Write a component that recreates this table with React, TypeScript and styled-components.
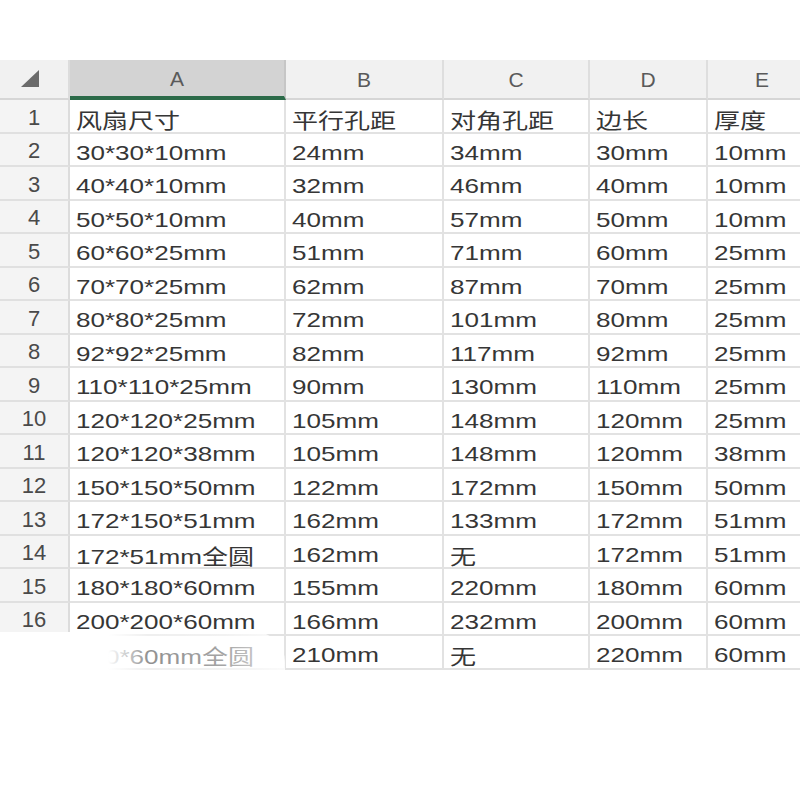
import styled, { createGlobalStyle } from "styled-components"

const GlobalStyle = createGlobalStyle`
  html, body {
    margin: 0;
    padding: 0;
    background: #ffffff;
  }
  body {
    font-family: "Liberation Sans", "Noto Sans CJK SC", sans-serif;
  }
`

const columns = ["A", "B", "C", "D", "E"]

const rows: string[][] = [
  ["风扇尺寸", "平行孔距", "对角孔距", "边长", "厚度"],
  ["30*30*10mm", "24mm", "34mm", "30mm", "10mm"],
  ["40*40*10mm", "32mm", "46mm", "40mm", "10mm"],
  ["50*50*10mm", "40mm", "57mm", "50mm", "10mm"],
  ["60*60*25mm", "51mm", "71mm", "60mm", "25mm"],
  ["70*70*25mm", "62mm", "87mm", "70mm", "25mm"],
  ["80*80*25mm", "72mm", "101mm", "80mm", "25mm"],
  ["92*92*25mm", "82mm", "117mm", "92mm", "25mm"],
  ["110*110*25mm", "90mm", "130mm", "110mm", "25mm"],
  ["120*120*25mm", "105mm", "148mm", "120mm", "25mm"],
  ["120*120*38mm", "105mm", "148mm", "120mm", "38mm"],
  ["150*150*50mm", "122mm", "172mm", "150mm", "50mm"],
  ["172*150*51mm", "162mm", "133mm", "172mm", "51mm"],
  ["172*51mm全圆", "162mm", "无", "172mm", "51mm"],
  ["180*180*60mm", "155mm", "220mm", "180mm", "60mm"],
  ["200*200*60mm", "166mm", "232mm", "200mm", "60mm"],
  ["220*60mm全圆", "210mm", "无", "220mm", "60mm"],
]

export default function App() {
  return (
    <>
      <GlobalStyle />
      <Page>
        <Sheet>
          <Corner>
            <svg width="20" height="18" viewBox="0 0 20 18">
              <polygon points="19,0 19,17 1,17" fill="#6b6b6b" />
            </svg>
          </Corner>
          {columns.map(c => (
            <ColHead key={c} $selected={c === "A"}>
              {c}
            </ColHead>
          ))}
          {rows.map((r, i) => (
            <Row key={i} index={i + 1} cells={r} />
          ))}
        </Sheet>
        <Smudge />
      </Page>
    </>
  )
}

type RowProps = {
  index: number
  cells: string[]
}

function Row({ index, cells }: RowProps) {
  return (
    <>
      <RowHead>{index}</RowHead>
      {cells.map((v, i) => (
        <Cell key={i}>
          <Stretch>{v}</Stretch>
        </Cell>
      ))}
    </>
  )
}

const Page = styled.div`
  position: relative;
  width: 800px;
  height: 800px;
  overflow: hidden;
  padding-top: 60px;
  box-sizing: border-box;
`

const Sheet = styled.div`
  display: grid;
  grid-template-columns: 70px 216px 158px 146px 118px 110px;
  grid-template-rows: 40px;
  grid-auto-rows: 33.5px;
  width: 818px;
`

const Corner = styled.div`
  display: flex;
  align-items: center;
  padding-left: 20px;
  background: #f1f1f1;
  border-right: 2px solid #dcdcdc;
  border-bottom: 2px solid #d6d6d6;
  box-sizing: border-box;
`

const ColHead = styled.div<{ $selected?: boolean }>`
  display: flex;
  align-items: center;
  justify-content: center;
  padding-top: 2px;
  background: ${p => (p.$selected ? "#d3d3d3" : "#f1f1f1")};
  color: #5a5a5a;
  font-size: 21px;
  border-right: 2px solid ${p => (p.$selected ? "#c6c6c6" : "#dedede")};
  border-bottom: ${p => (p.$selected ? "4px solid #2b6a48" : "2px solid #d6d6d6")};
  box-sizing: border-box;
`

const RowHead = styled.div`
  display: flex;
  align-items: center;
  justify-content: center;
  padding-top: 4px;
  background: #f4f4f4;
  color: #4a4a4a;
  font-size: 22px;
  border-right: 2px solid #dcdcdc;
  border-bottom: 2px solid #e0e0e0;
  box-sizing: border-box;
`

const Cell = styled.div`
  display: flex;
  align-items: center;
  padding: 7px 0 0 6px;
  color: #363636;
  font-size: 21px;
  background: #ffffff;
  border-right: 2px solid #e2e2e2;
  border-bottom: 2px solid #e2e2e2;
  box-sizing: border-box;
  white-space: nowrap;
  overflow: hidden;
`

const Stretch = styled.span`
  display: inline-block;
  transform: scaleX(1.24);
  transform-origin: left center;
`

const Smudge = styled.div`
  position: absolute;
  left: 0;
  top: 632px;
  width: 285px;
  height: 60px;
  border-radius: 0 30px 20px 0;
  background: linear-gradient(
    to right,
    #ffffff 0,
    #ffffff 38%,
    rgba(255, 255, 255, 0.45) 52%,
    rgba(255, 255, 255, 0.55) 78%,
    rgba(255, 255, 255, 0.85) 100%
  );
`
